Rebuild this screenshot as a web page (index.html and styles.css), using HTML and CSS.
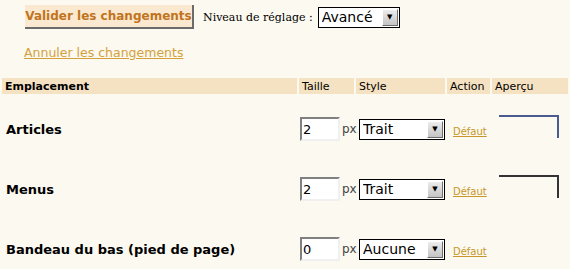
FILE: index.html
```html
<!DOCTYPE html>
<html lang="fr">
<head>
  <meta charset="UTF-8">
  <title>Bordures</title>
  <link rel="stylesheet" href="styles.css">
</head>
<body>
  <!-- Barre d'actions -->
  <div class="toolbar">
    <button class="valider" type="button">Valider les changements</button>
    <label class="niveau">Niveau de réglage :</label>
    <span class="combo combo-niveau">
      <select><option>Avancé</option></select>
      <span class="arrow">&#9660;</span>
    </span>
  </div>
  <div class="annuler"><a href="#">Annuler les changements</a></div>

  <!-- Tableau des bordures -->
  <table class="bordures">
    <colgroup>
      <col class="c-emp"><col class="c-taille"><col class="c-style"><col class="c-action"><col class="c-apercu">
    </colgroup>
    <thead>
      <tr>
        <th class="emp">Emplacement</th>
        <th>Taille</th>
        <th>Style</th>
        <th>Action</th>
        <th>Aperçu</th>
      </tr>
    </thead>
    <tbody>
      <tr>
        <td class="emp">Articles</td>
        <td><input class="taille" type="text" value="2"><span class="unit">px</span></td>
        <td class="style"><span class="combo"><select><option>Trait</option></select><span class="arrow">&#9660;</span></span></td>
        <td><a class="defaut" href="#">Défaut</a></td>
        <td><div class="apercu bleu"></div></td>
      </tr>
      <tr>
        <td class="emp">Menus</td>
        <td><input class="taille" type="text" value="2"><span class="unit">px</span></td>
        <td class="style"><span class="combo"><select><option>Trait</option></select><span class="arrow">&#9660;</span></span></td>
        <td><a class="defaut" href="#">Défaut</a></td>
        <td><div class="apercu sombre"></div></td>
      </tr>
      <tr>
        <td class="emp">Bandeau du bas (pied de page)</td>
        <td><input class="taille" type="text" value="0"><span class="unit">px</span></td>
        <td class="style"><span class="combo"><select><option>Aucune</option></select><span class="arrow">&#9660;</span></span></td>
        <td><a class="defaut" href="#">Défaut</a></td>
        <td><div class="apercu vide"></div></td>
      </tr>
    </tbody>
  </table>
</body>
</html>
```

FILE: styles.css
```css
body {
  margin: 0;
  background: #fbf9f0;
  font-family: "DejaVu Sans", Verdana, sans-serif;
  color: #000;
}
.toolbar {
  display: flex;
  align-items: center;
  padding: 5px 0 0 25px;
  height: 24px;
}
.valider {
  font-family: "DejaVu Sans", Verdana, sans-serif;
  font-weight: bold;
  font-size: 12px;
  color: #c0741d;
  background: #fbe8d0;
  border: 0;
  border-right: 2px solid #6b6b6b;
  border-bottom: 2px solid #6b6b6b;
  height: 24px;
  width: 169px;
  padding: 0;
  margin-right: 9px;
}
.niveau {
  font-family: "DejaVu Serif", serif;
  font-size: 11px;
  margin-right: 5px;
}
.combo {
  display: inline-flex;
  align-items: stretch;
  border: 1px solid #000;
  background: #fff;
  height: 19px;
  width: 84px;
  vertical-align: middle;
}
.combo-niveau {
  width: 80px;
}
.combo select {
  appearance: none;
  -webkit-appearance: none;
  border: 0;
  outline: 0;
  background: transparent;
  font-family: "DejaVu Sans", Verdana, sans-serif;
  font-size: 14px;
  padding: 0 0 0 3px;
  margin: 0;
  flex: 1;
  min-width: 0;
  color: #000;
}
.arrow {
  width: 14px;
  margin: 1px;
  background: linear-gradient(#ececec, #c4c4c4);
  border: 1px solid;
  border-color: #fff #6e6e6e #6e6e6e #fff;
  font-size: 7px;
  line-height: 15px;
  text-align: center;
  color: #000;
}
.annuler {
  padding: 16px 0 0 24px;
  height: 26px;
  font-size: 12.5px;
}
.annuler a {
  color: #d4a03c;
}
.bordures {
  border-spacing: 2px;
  table-layout: fixed;
  width: 100%;
  margin-top: 5px;
}
.c-emp { width: 295px; }
.c-taille { width: 55px; }
.c-style { width: 89px; }
.c-action { width: 43px; }
.bordures th {
  background: #f5e2c2;
  font-size: 11px;
  font-weight: normal;
  text-align: left;
  height: 16px;
  padding: 0 3px;
  white-space: nowrap;
}
.bordures th.emp {
  font-weight: bold;
}
.bordures td {
  height: 50px;
  padding: 8px 0 0 0;
  vertical-align: middle;
  white-space: nowrap;
}
.bordures td.emp {
  font-size: 13px;
  font-weight: bold;
  padding-left: 4px;
}
.bordures td.style {
  padding-left: 3px;
}
.taille {
  width: 35px;
  height: 20px;
  padding: 0 0 0 1px;
  margin: 0 0 0 1px;
  border: 2px solid;
  border-color: #808080 #f0f0f0 #f0f0f0 #808080;
  background: #fff;
  font-family: "DejaVu Sans", Verdana, sans-serif;
  font-size: 13px;
  vertical-align: middle;
}
.unit {
  font-size: 12px;
  color: #444;
  margin-left: 2px;
  vertical-align: middle;
}
.defaut {
  font-size: 10px;
  color: #c8962a;
  margin-left: 6px;
}
.apercu {
  width: 58px;
  height: 21px;
  margin: -6px 0 0 7px;
  border-top: 2px solid;
  border-right: 2px solid;
}
.apercu.bleu { border-color: #4b5a8f; }
.apercu.sombre { border-color: #333; }
.apercu.vide { border-color: transparent; }
```
